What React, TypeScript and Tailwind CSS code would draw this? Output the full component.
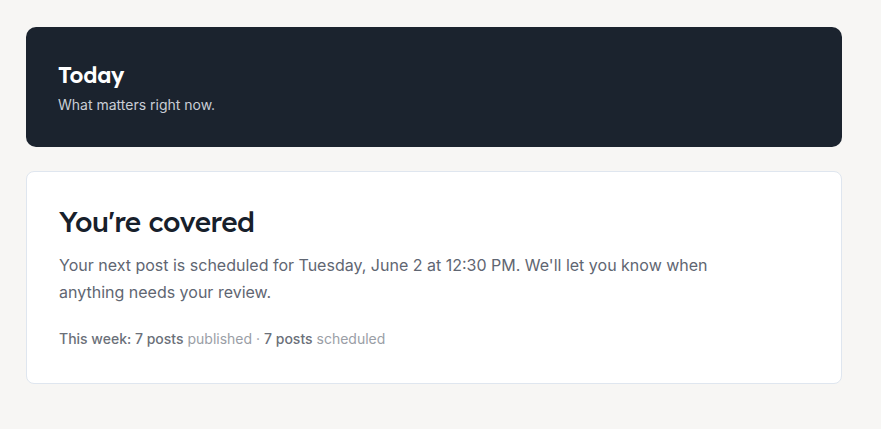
import React from "react";

export default function App() {
  return (
    <div className="min-h-screen bg-[#f7f6f4] pt-[27px] pl-[26px]" style={{ fontFamily: "Inter, 'Noto Sans', sans-serif" }}>
      <div className="flex w-[816px] flex-col gap-6">
        <div className="flex h-[120px] flex-col justify-center rounded-[10px] bg-[#1b232e] px-8 pt-[2px]">
          <h1 className="text-[22px] font-semibold leading-[28px] tracking-[-0.01em] text-white" style={{ fontFamily: "Lexend, Inter, sans-serif" }}>Today</h1>
          <p className="mt-[6px] text-[14px] leading-[20px] text-[#c9ced6]">What matters right now.</p>
        </div>
        <div className="rounded-[8px] border border-[#dfe6ef] bg-white px-8 pt-[30px] pb-[34px]">
          <h2 className="text-[28px] font-medium leading-[40px] tracking-[-0.02em] text-[#17202b]" style={{ fontFamily: "Lexend, Inter, sans-serif" }}>You're covered</h2>
          <p className="mt-[10px] max-w-[690px] text-[16px] leading-[27px] text-[#5f6672]">
            Your next post is scheduled for Tuesday, June 2 at 12:30 PM. We'll let you know when anything needs your review.
          </p>
          <p className="mt-[23px] text-[14px] leading-[20px] text-[#9a9ea6]">
            <span className="font-medium text-[#6b7079]">This week: 7 posts</span> published · <span className="font-medium text-[#6b7079]">7 posts</span> scheduled
          </p>
        </div>
      </div>
    </div>
  );
}
